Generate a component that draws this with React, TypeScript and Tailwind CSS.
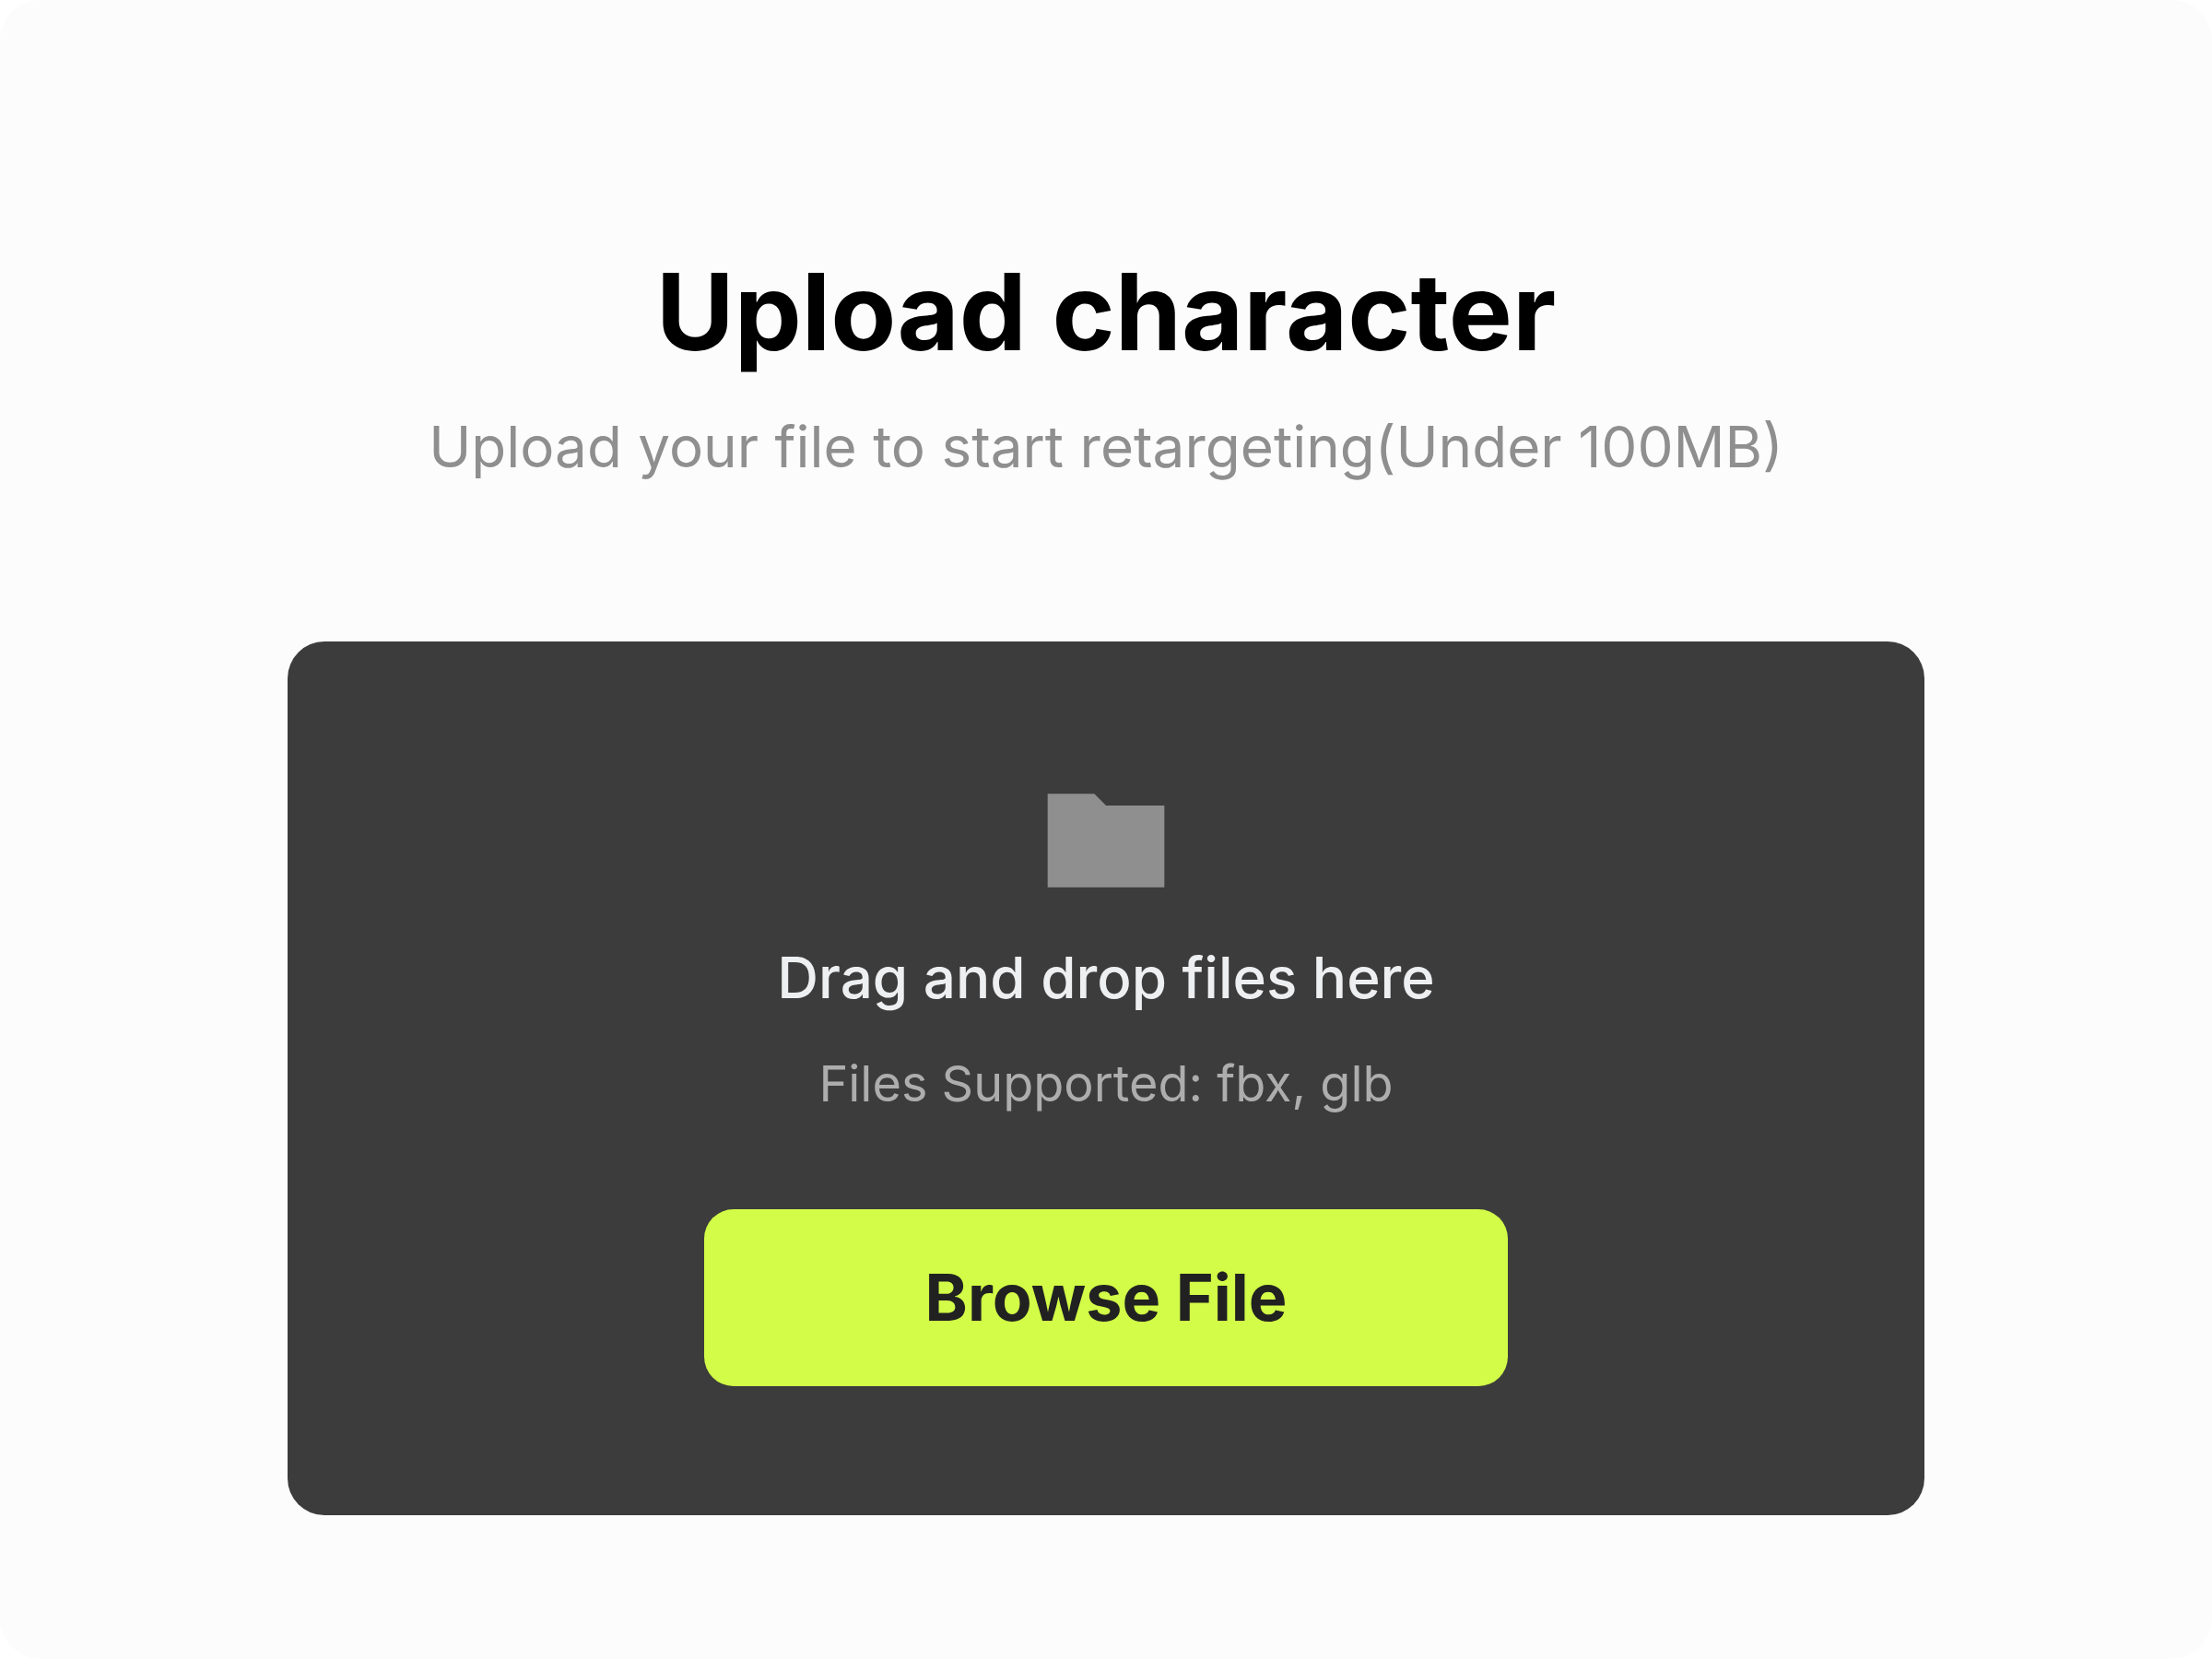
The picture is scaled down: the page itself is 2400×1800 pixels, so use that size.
import { useRef } from "react";

function FolderIcon() {
  return (
    <svg viewBox="0 0 24 24" className="size-[152px]" fill="#8f8f8f" aria-hidden="true">
      <path d="M2 20V4h8l2 2h10v14z" />
    </svg>
  );
}

export default function App() {
  const fileInput = useRef<HTMLInputElement>(null);

  return (
    <div className="min-h-screen bg-white font-['Inter',sans-serif]">
      <main className="flex min-h-screen flex-col items-center rounded-[44px] bg-[#fcfcfc] px-[13%] pt-[268px] pb-[156px]">
        <header className="text-center">
          <h1 className="text-[116px] leading-[140px] font-bold text-black">Upload character</h1>
          <p className="mt-[39px] text-[62px] leading-[76px] text-[#8f8f8f]">
            Upload your file to start retargeting(Under 100MB)
          </p>
        </header>

        <section className="mt-[173px] flex w-full flex-col items-center rounded-[40px] bg-[#3c3c3c] py-[140px]">
          <FolderIcon />
          <p className="mt-[35px] text-[62px] leading-[76px] font-medium text-[#eeeff1]">
            Drag and drop files here
          </p>
          <p className="mt-[43px] text-[54px] leading-[68px] text-[#adadad]">
            Files Supported: fbx, glb
          </p>
          <input ref={fileInput} type="file" accept=".fbx,.glb" aria-label="Character file" className="hidden" />
          <button
            type="button"
            onClick={() => fileInput.current?.click()}
            className="mt-[102px] h-48 w-[872px] max-w-full rounded-[32px] bg-[#d2fc47] text-[70px] leading-[84px] font-bold text-[#212121]"
          >
            Browse File
          </button>
        </section>
      </main>
    </div>
  );
}
